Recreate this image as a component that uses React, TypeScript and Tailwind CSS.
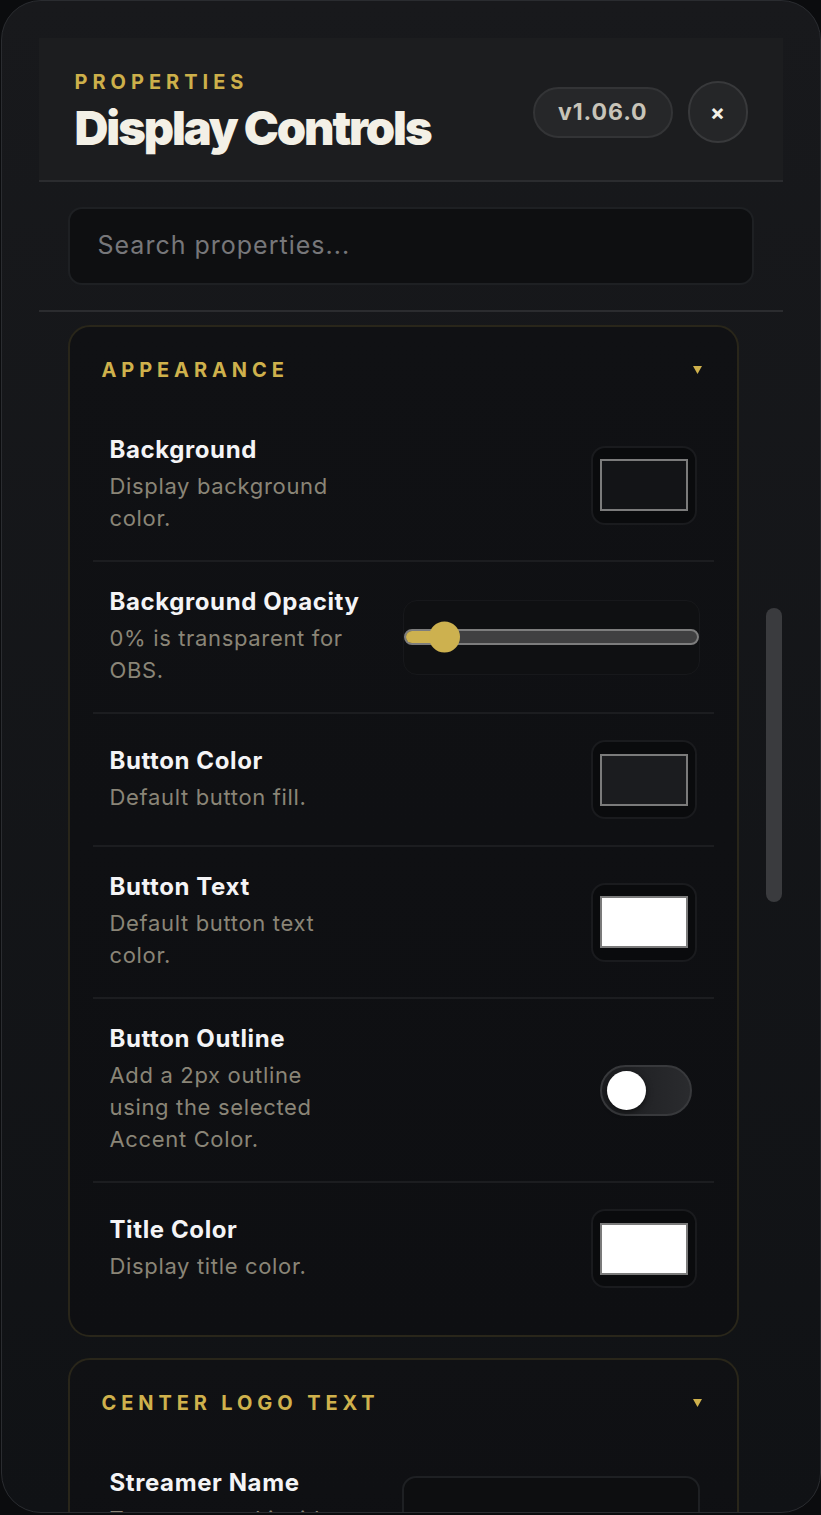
import React from "react";

const font = { fontFamily: "Inter, 'Noto Sans', sans-serif" };

function Swatch({ fill }: { fill: string }) {
  return (
    <div className="flex h-[79px] w-[106px] shrink-0 items-center justify-center rounded-[14px] border-2 border-[#1a1b1e] bg-[#0a0b0d]">
      <div className={`h-[52px] w-[88px] border-2 border-[#7b7b7b] ${fill}`} />
    </div>
  );
}

function Slider() {
  return (
    <div className="relative -mr-[3px] flex h-[75px] w-[297px] shrink-0 items-center rounded-[14px] border border-[#17181b] bg-[#0f1012]">
      <div className="relative h-[16px] w-full rounded-full border-2 border-[#7d7d7d] bg-[#404041]">
        <div className="h-full w-[40px] rounded-l-full bg-[#cdb14f]" />
        <div className="absolute left-[23px] top-1/2 h-[31px] w-[31px] -translate-y-1/2 rounded-full bg-[#cdb14f]" />
      </div>
    </div>
  );
}

function Toggle() {
  return (
    <div className="mr-[5px] flex h-[51px] w-[92px] shrink-0 items-center rounded-full border-2 border-[#38393c] bg-gradient-to-r from-[#1c1d20] to-[#2a2b2e] px-[5px]">
      <div className="h-[39px] w-[39px] rounded-full bg-white shadow-[0_2px_6px_rgba(0,0,0,0.6)]" />
    </div>
  );
}

function Row({
  title,
  desc,
  control,
  last,
}: {
  title: string;
  desc: string;
  control: React.ReactNode;
  last?: boolean;
}) {
  return (
    <div
      className={`flex items-center justify-between gap-4 px-[17px] py-[26px] ${
        last ? "" : "border-b-2 border-[#1c1d20]"
      }`}
    >
      <div className="max-w-[252px]">
        <div className="mb-[6px] text-[24px] font-bold leading-[28px] tracking-[0.025em] text-[#f4f4f6]">{title}</div>
        <div className="text-[22px] leading-[32px] tracking-[0.03em] text-[#8a8577]">{desc}</div>
      </div>
      {control}
    </div>
  );
}

function Caret() {
  return (
    <svg width="9" height="9" viewBox="0 0 9 9">
      <polygon points="0,1 9,1 4.5,9" fill="#cfb14c" />
    </svg>
  );
}

function Section({ title, children }: { title: string; children: React.ReactNode }) {
  return (
    <div className="rounded-[22px] border-2 border-[#29261a] bg-gradient-to-b from-[#101114] to-[#0e0f12] px-[23px] pb-[21px]">
      <div className="flex h-[83px] items-center justify-between pl-[9px] pr-[12px] pt-[2px]">
        <span className="text-[20px] font-bold uppercase tracking-[0.245em] text-[#cfb14c]">{title}</span>
        <Caret />
      </div>
      {children}
    </div>
  );
}

export default function App() {
  return (
    <div className="h-[1515px] overflow-hidden bg-[#0b0c0e]" style={font}>
      <div className="mx-auto flex h-[1513px] w-[820px] flex-col overflow-hidden rounded-[40px] border border-[#2a2c30] bg-gradient-to-b from-[#18191c] to-[#101215] px-[37px] pt-[37px]">
        <header className="flex items-center justify-between border-b-2 border-[#2b2c2f] bg-[#1c1d1f] pb-[24px] pl-[36px] pr-[35px] pt-[30px]">
          <div>
            <div className="text-[20px] font-bold uppercase leading-[28px] tracking-[0.25em] text-[#cdb04a]">
              Properties
            </div>
            <h1 className="mt-[4px] text-[47px] font-black leading-[56px] tracking-[-0.045em] text-[#f3f0e6]">
              Display Controls
            </h1>
          </div>
          <div className="flex items-center gap-[15px]">
            <span className="flex h-[51px] items-center rounded-full border-2 border-[#333436] bg-[#262729] px-[23px] text-[23px] font-bold tracking-[0.04em] text-[#c8c4b8]">
              v1.06.0
            </span>
            <button className="flex h-[62px] w-[60px] items-center justify-center rounded-full border-2 border-[#38393b] bg-[#252628] text-[22px] font-bold text-[#f3f0e6]">
              ×
            </button>
          </div>
        </header>

        <div className="border-b-2 border-[#2b2c2f] px-[29px] py-[25px]">
          <div className="flex h-[78px] items-center rounded-[14px] border-2 border-[#1e2023] bg-[#0e0f11] px-[28px] text-[25px] tracking-[0.04em] text-[#77777a]">
            Search properties...
          </div>
        </div>

        <div className="relative flex-1 overflow-hidden">
          <div className="flex flex-col gap-[21px] pl-[29px] pr-[44px] pt-[13px]">
            <Section title="Appearance">
              <Row title="Background" desc="Display background color." control={<Swatch fill="bg-[#131417]" />} />
              <Row title="Background Opacity" desc="0% is transparent for OBS." control={<Slider />} />
              <Row title="Button Color" desc="Default button fill." control={<Swatch fill="bg-[#1b1c1f]" />} />
              <Row title="Button Text" desc="Default button text color." control={<Swatch fill="bg-white" />} />
              <Row
                title="Button Outline"
                desc="Add a 2px outline using the selected Accent Color."
                control={<Toggle />}
              />
              <Row title="Title Color" desc="Display title color." control={<Swatch fill="bg-white" />} last />
            </Section>
            <Section title="Center Logo Text">
              <Row
                title="Streamer Name"
                desc="Text centered inside the logo ring."
                control={
                  <div className="-mr-[3px] h-[84px] w-[298px] shrink-0 rounded-[14px] border-2 border-[#1e2023] bg-[#0d0e10]" />
                }
                last
              />
            </Section>
          </div>
          <div className="absolute right-[1px] top-[296px] h-[294px] w-[16px] rounded-full bg-[#3a3b3e]" />
        </div>
      </div>
    </div>
  );
}
